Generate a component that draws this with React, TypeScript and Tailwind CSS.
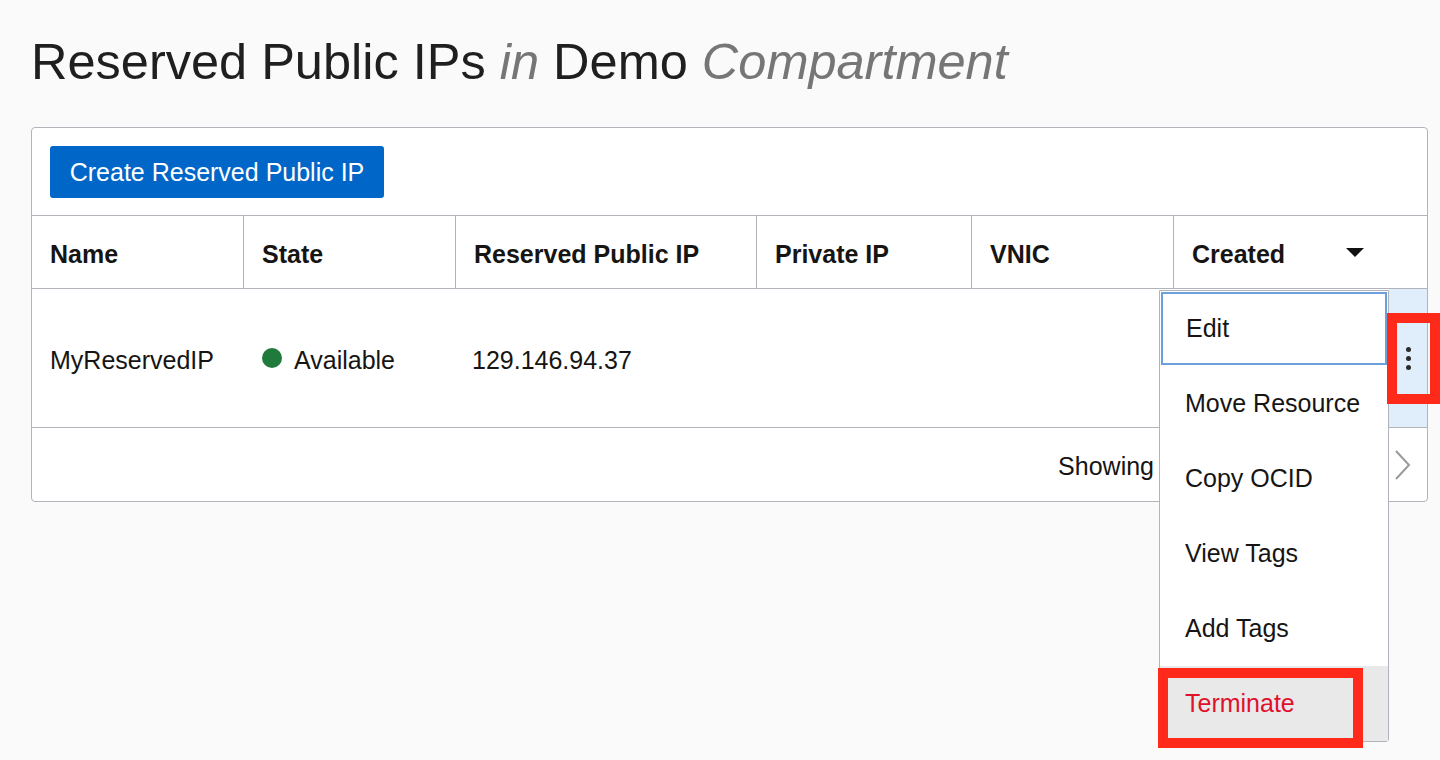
import React from "react";

const font = { fontFamily: '"Liberation Sans", Arial, sans-serif' };

export default function App() {
  const headers = ["Name", "State", "Reserved Public IP", "Private IP", "VNIC", "Created"];
  const menu = ["Edit", "Move Resource", "Copy OCID", "View Tags", "Add Tags", "Terminate"];
  return (
    <div
      className="relative min-h-screen w-[1440px] overflow-hidden bg-[#fafafa] text-[#161513]"
      style={font}
    >
      <div className="pl-[31px] pt-[33px]">
        <h1 className="text-[50.5px] leading-[58px] font-normal text-[#1f1f1f]">
          Reserved Public IPs <i className="text-[#767676]">in</i> Demo{" "}
          <i className="text-[#767676]">Compartment</i>
        </h1>

        <div className="mt-[36px] w-[1397px] rounded-[4px] border border-[#b1b5bb] bg-white">
          {/* toolbar */}
          <div className="border-b border-[#b1b5bb] px-[18px] pt-[18px] pb-[17px]">
            <button className="h-[52px] w-[334px] rounded-[3px] bg-[#0067c8] pt-[2px] text-[25px] text-white">
              Create Reserved Public IP
            </button>
          </div>

          {/* header */}
          <div className="grid h-[73px] grid-cols-[212px_212px_301px_215px_202px_1fr] border-b border-[#b1b5bb]">
            {headers.map((h, i) => (
              <div
                key={h}
                className={`flex items-center pl-[18px] pt-[6px] text-[25px] font-bold ${
                  i < headers.length - 1 ? "border-r border-[#b1b5bb]" : "justify-between pr-[63px]"
                }`}
              >
                <span>{h}</span>
                {i === headers.length - 1 && (
                  <svg width="18" height="9" viewBox="0 0 18 9" className="-mt-[6px]">
                    <polygon points="0,0 18,0 9,9" fill="#111" />
                  </svg>
                )}
              </div>
            ))}
          </div>

          {/* body row */}
          <div className="grid h-[139px] grid-cols-[212px_212px_301px_215px_202px_1fr] border-b border-[#b1b5bb] text-[25px]">
            <div className="flex items-center pl-[18px] pt-[6px]">MyReservedIP</div>
            <div className="flex items-center gap-[12px] pl-[18px]">
              <span className="h-[20px] w-[20px] rounded-full bg-[#1f7a3b]" />
              <span className="pt-[6px]">Available</span>
            </div>
            <div className="flex items-center pl-[16px] pt-[6px]">129.146.94.37</div>
            <div />
            <div />
            <div className="flex justify-end">
              <div className="flex w-[38px] flex-col items-center justify-center gap-[4px] bg-[#dfeefa]">
                <span className="h-[5px] w-[5px] rounded-full bg-[#2b2b2b]" />
                <span className="h-[5px] w-[5px] rounded-full bg-[#2b2b2b]" />
                <span className="h-[5px] w-[5px] rounded-full bg-[#2b2b2b]" />
              </div>
            </div>
          </div>

          {/* footer */}
          <div className="flex h-[73px] items-center justify-end pr-[16px] text-[25px]">
            <span className="mr-[240px] pt-[4px]">Showing</span>
            <svg width="17" height="32" viewBox="0 0 17 32">
              <polyline points="2,2 15,16 2,30" fill="none" stroke="#9a9a9a" strokeWidth="2" />
            </svg>
          </div>
        </div>
      </div>

      {/* action menu */}
      <div className="absolute left-[1159px] top-[290px] w-[230px] rounded-b-[3px] border border-[#b1b5bb] bg-white text-[25px]">
        {menu.map((m, i) => (
          <div
            key={m}
            className={`flex h-[75px] items-center ${
              i === menu.length - 1 ? "bg-[#e9e9ea] text-[#e0112b]" : ""
            }`}
          >
            {i === 0 ? (
              <div className="m-[1px] flex h-[73px] w-full items-center border-2 border-[#6ca0dc] pl-[23px]">
                {m}
              </div>
            ) : (
              <span className="pl-[25px]">{m}</span>
            )}
          </div>
        ))}
      </div>

      {/* annotation boxes */}
      <div className="absolute left-[1387px] top-[313px] h-[91px] w-[53px] border-[10px] border-[#ff2a1a]" />
      <div className="absolute left-[1158px] top-[668px] h-[80px] w-[205px] border-[10px] border-[#ff2a1a]" />
    </div>
  );
}
